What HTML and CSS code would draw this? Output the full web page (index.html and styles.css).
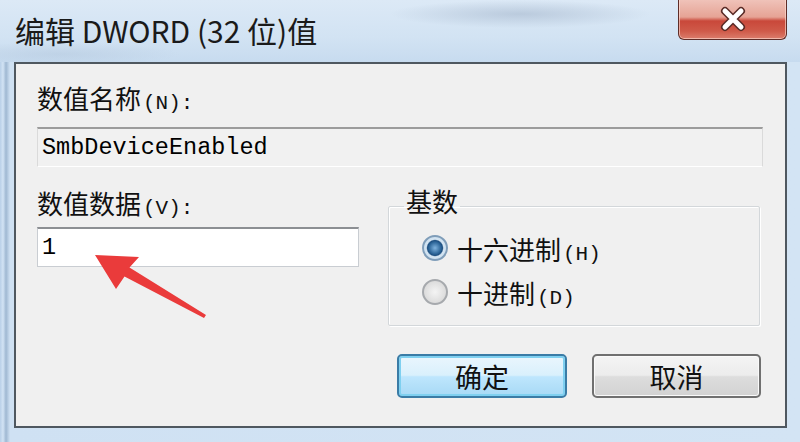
FILE: index.html
```html
<!DOCTYPE html>
<html lang="zh-CN">
<head>
    <meta charset="UTF-8">
    <title>编辑 DWORD (32 位)值</title>
    <link rel="stylesheet" href="styles.css">
</head>
<body>
    <div class="window">
        <div class="titlebar">
            <span class="title">编辑 DWORD (32 位)值</span>
            <button class="close" aria-label="关闭">
                <svg width="34" height="26" viewBox="0 0 34 26">
                    <path d="M9 5 L25 21 M25 5 L9 21" stroke="#5a2b26" stroke-width="8" stroke-linecap="round"/>
                    <path d="M9 5 L25 21 M25 5 L9 21" stroke="#ffffff" stroke-width="5" stroke-linecap="round"/>
                </svg>
            </button>
        </div>
        <div class="client">
            <div class="label">数值名称<span class="key">(N):</span></div>
            <div class="field readonly">SmbDeviceEnabled</div>
            <div class="row">
                <div class="col-left">
                    <div class="label">数值数据<span class="key">(V):</span></div>
                    <div class="field edit">1</div>
                </div>
                <fieldset class="base">
                    <legend>基数</legend>
                    <div class="option">
                        <span class="radio checked"></span>
                        <span>十六进制<span class="key">(H)</span></span>
                    </div>
                    <div class="option">
                        <span class="radio"></span>
                        <span>十进制<span class="key">(D)</span></span>
                    </div>
                </fieldset>
            </div>
            <div class="buttons">
                <button class="btn default">确定</button>
                <button class="btn">取消</button>
            </div>
        </div>
        <!-- red annotation arrow pointing at the value box -->
        <svg class="arrow" width="800" height="442" viewBox="0 0 800 442">
            <polygon points="95,255 139,257 129.5,267.5 206,315 204,318 124.5,276.5 116,289" fill="#ea3b3b"/>
        </svg>
    </div>
</body>
</html>
```

FILE: styles.css
```css
body {
    margin: 0;
    font-family: "Noto Sans CJK SC", "Noto Sans", sans-serif;
    color: #111;
}
.window {
    position: relative;
    width: 800px;
    height: 442px;
    overflow: hidden;
    background: linear-gradient(to right, #b9d0e8 0, #d2e3f4 3px, #9fb8d2 6px, #cfe1f3 10px, #d3e4f4 100%);
}
.titlebar {
    height: 62px;
    display: flex;
    align-items: flex-start;
    justify-content: space-between;
    background:
        radial-gradient(ellipse 130px 14px at 520px 14px, rgba(150, 168, 192, 0.45), transparent),
        radial-gradient(ellipse 120px 12px at 60px 54px, rgba(170, 190, 212, 0.35), transparent),
        linear-gradient(to bottom, #dce9f6, #d2e3f3 60%, #c7dbef);
}
.title {
    font-size: 30px;
    line-height: 30px;
    margin: 15px 0 0 15px;
    color: #1a1a1a;
}
.close {
    width: 109px;
    height: 41px;
    margin: -1px 13px 0 0;
    padding: 0;
    border: 1px solid #5e2d28;
    border-top: none;
    border-radius: 0 0 6px 6px;
    display: flex;
    align-items: center;
    justify-content: center;
    background: linear-gradient(to bottom, #f0c4bb 0, #e6a395 45%, #c9483a 55%, #cf5a49 80%, #dc7d6c 100%);
    box-shadow: inset 0 0 0 1px rgba(255, 225, 215, 0.6);
}
.client {
    position: relative;
    box-sizing: border-box;
    height: 366px;
    margin: 0 13px 0 14px;
    padding: 19px 22px 0 21px;
    border: 2px solid #4f5860;
    background: #f0f0f0;
}
.label {
    font-size: 26px;
    line-height: 30px;
    height: 30px;
    color: #111;
}
.key {
    font-family: "Liberation Mono", monospace;
    font-size: 21px;
    line-height: 1;
    margin-left: 2px;
}
.field {
    box-sizing: border-box;
    height: 40px;
    display: flex;
    align-items: center;
    padding-left: 4px;
    font-family: "Liberation Mono", monospace;
    font-size: 23.5px;
    color: #000;
}
.readonly {
    margin-top: 14px;
    background: #f1f1f1;
    border: 1px solid #dadada;
    border-top: 2px solid #9c9c9c;
    border-bottom-color: #ffffff;
}
.edit {
    margin-top: 9px;
    background: #ffffff;
    border: 1px solid #c9cdd2;
    border-top: 2px solid #8c8f93;
}
.row {
    display: flex;
    margin-top: 21px;
}
.col-left {
    width: 322px;
}
.base {
    flex: 1;
    margin: -2px 3px 0 29px;
    padding: 0 0 11px 33px;
    border: 1px solid #d3d7da;
    box-shadow: inset 1px 1px 0 #ffffff, 1px 1px 0 #ffffff;
    border-radius: 2px;
}
.base legend {
    font-size: 26px;
    line-height: 30px;
    padding: 0 2px 10px;
    margin-left: -18px;
}
.option {
    height: 44px;
    display: flex;
    align-items: center;
    gap: 9px;
    font-size: 26px;
}
.radio {
    box-sizing: border-box;
    width: 26px;
    height: 26px;
    border-radius: 50%;
    border: 2px solid #a6a9ad;
    background: radial-gradient(circle, #f4f4f4 0, #dcdcdc 70%, #eeeeee 100%);
}
.radio.checked {
    border-color: #7f9db9;
    background: radial-gradient(circle, #7fb3de 0, #2d6699 38%, #1d4f80 48%, #d6e6f3 56%, #b9d2e6 100%);
}
.buttons {
    display: flex;
    justify-content: flex-end;
    gap: 25px;
    margin-top: 28px;
    padding-right: 2px;
}
.btn {
    width: 169px;
    height: 44px;
    padding: 0;
    font-family: "Noto Sans CJK SC", sans-serif;
    font-size: 27px;
    color: #111;
    border: 2px solid #707070;
    border-radius: 5px;
    background: linear-gradient(to bottom, #f4f4f4 0, #ececec 48%, #dddddd 52%, #d2d2d2 100%);
    box-shadow: inset 0 0 0 1px #fafafa;
}
.btn.default {
    width: 170px;
    border-color: #3a7ca6;
    background: linear-gradient(to bottom, #eaf6fd 0, #d9f0fc 48%, #bee6fd 52%, #a7d9f5 100%);
    box-shadow: inset 0 0 0 2px #7fd0f0;
}
.arrow {
    position: absolute;
    left: 0;
    top: 0;
    pointer-events: none;
    filter: blur(0.6px);
}
```
